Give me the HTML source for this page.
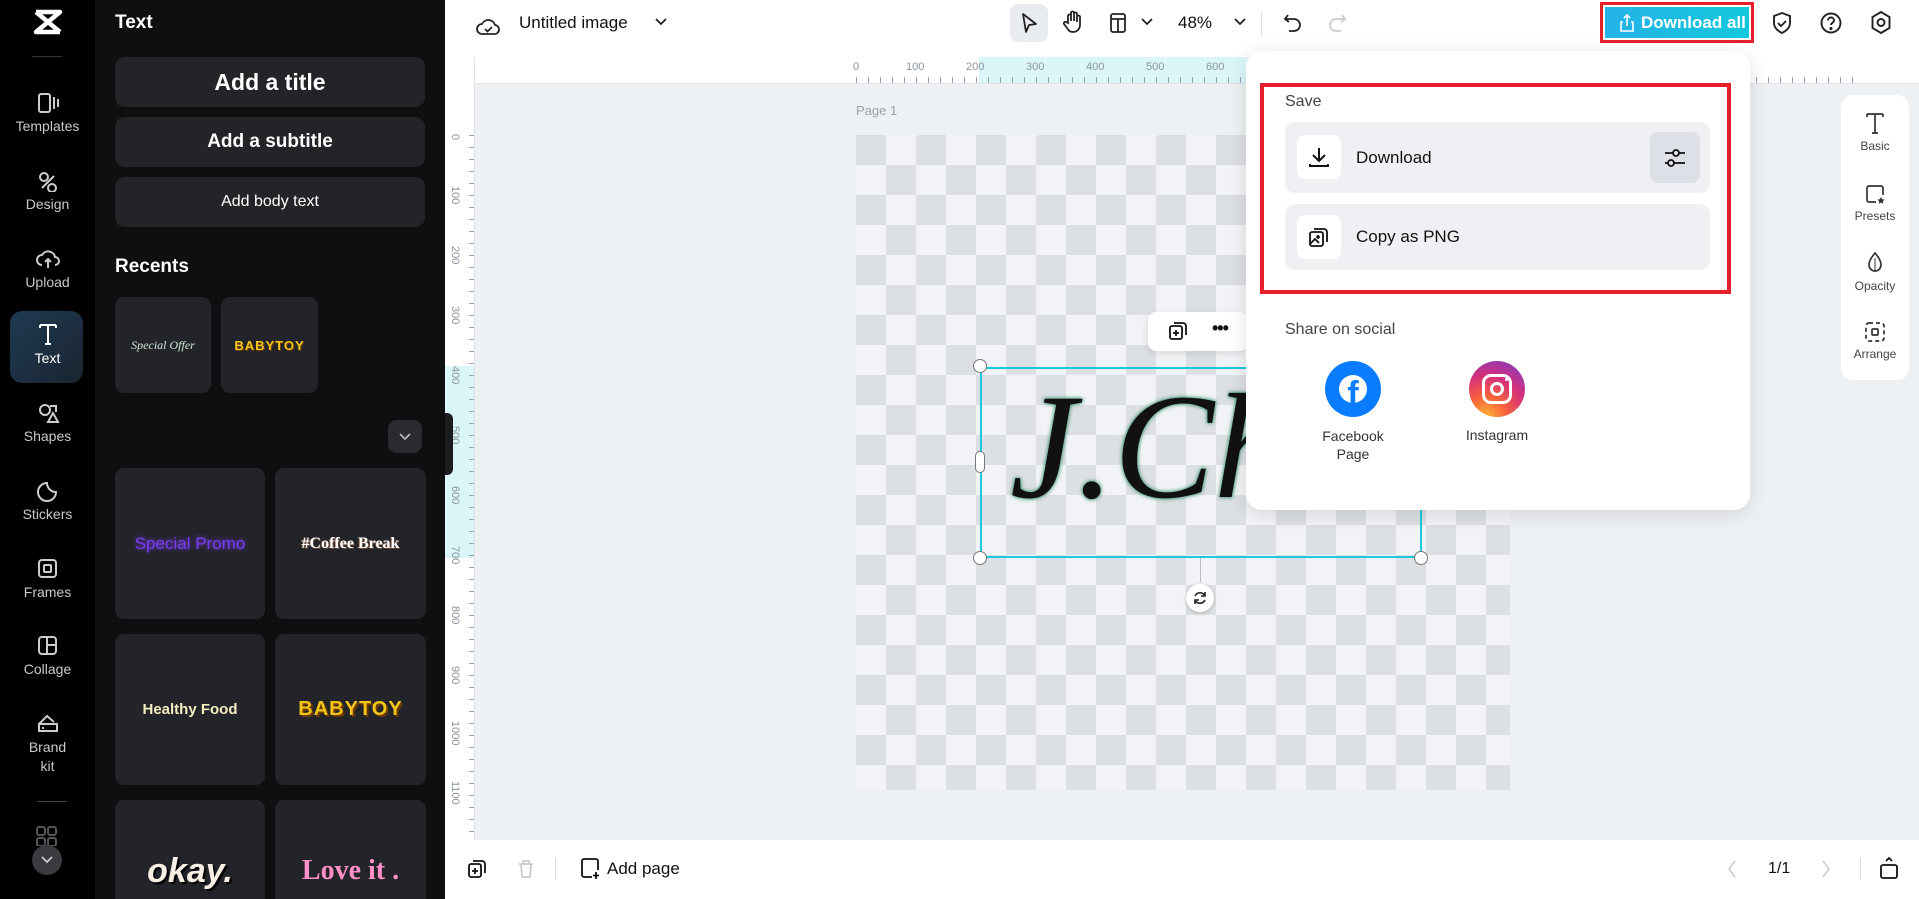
<!DOCTYPE html>
<html><head><meta charset="utf-8">
<style>
*{box-sizing:border-box;margin:0;padding:0}
html,body{width:1919px;height:899px;overflow:hidden}
body{position:relative;font-family:"Liberation Sans",sans-serif;background:#eef1f4}
.a{position:absolute}
.rail{left:0;top:0;width:95px;height:899px;background:#000}
.ri{position:absolute;left:0;width:95px;text-align:center;color:#c9c9cc;font-size:14px}
.ri svg{display:block;margin:0 auto 4px}
.panel{left:95px;top:0;width:350px;height:899px;background:#0e0f11;overflow:hidden}
.btn{position:absolute;left:20px;width:310px;background:#232428;border-radius:10px;color:#fff;text-align:center;font-weight:bold}
.tile{position:absolute;background:#232429;border-radius:9px;display:flex;align-items:center;justify-content:center}
.top{left:445px;top:0;width:1474px;height:57px;background:#fff}
.ico{position:absolute}
.rulerT{left:475px;top:57px;width:1444px;height:27px;background:#fff;border-bottom:1px solid #dfe3e8}
.rulerL{left:445px;top:57px;width:30px;height:783px;background:#fff;border-right:1px solid #dfe3e8;overflow:hidden}
.bottom{left:445px;top:840px;width:1474px;height:59px;background:#fff}
.pop{left:1246px;top:51px;width:504px;height:459px;background:#fff;border-radius:16px;box-shadow:0 4px 20px rgba(0,0,0,.12)}
.row{position:absolute;left:39px;width:425px;background:#eef0f3;border-radius:10px}
.sq{position:absolute;left:12px;width:44px;height:44px;background:#fff;border-radius:8px}
.rp{position:absolute;left:0;width:68px;text-align:center;font-size:12px;color:#444}
.rp svg{display:block;margin:0 auto 4px}
</style></head><body>

<!-- rail -->
<div class="a rail">
 <svg class="a" style="left:33px;top:8px" width="30" height="28" viewBox="0 0 30 28"><path d="M3 4h24l-24 20h24M3 4l24 20" stroke="#fff" stroke-width="4.5" fill="none" stroke-linejoin="round"/></svg>
 <div class="a" style="left:32px;top:56px;width:30px;height:1px;background:#333"></div>
 <div class="ri" style="top:92px"><svg width="24" height="22" viewBox="0 0 24 22" fill="none" stroke="#ccc" stroke-width="2"><rect x="3" y="2" width="11" height="18" rx="2"/><path d="M18 5v12M22 7v8"/></svg>Templates</div>
 <div class="ri" style="top:170px"><svg width="24" height="22" viewBox="0 0 24 22" fill="none" stroke="#ccc" stroke-width="2"><circle cx="8" cy="7" r="4"/><path d="M6 18l12-12M12 18a4 4 0 108 0 4 4 0 10-8 0"/></svg>Design</div>
 <div class="ri" style="top:248px"><svg width="26" height="22" viewBox="0 0 26 22" fill="none" stroke="#ccc" stroke-width="2"><path d="M7 17a5 5 0 010-10 7 7 0 0113 2 4 4 0 010 8M13 20v-9M10 14l3-3 3 3"/></svg>Upload</div>
 <div class="a" style="left:10px;top:311px;width:73px;height:72px;border-radius:12px;background:linear-gradient(135deg,#1e3a52,#1a2430)"></div>
 <div class="ri" style="top:322px;color:#fff"><svg width="22" height="24" viewBox="0 0 22 24" fill="none" stroke="#fff" stroke-width="2"><path d="M3 3h16M11 3v19M3 3v3M19 3v3M8 22h6"/></svg>Text</div>
 <div class="ri" style="top:402px"><svg width="24" height="22" viewBox="0 0 24 22" fill="none" stroke="#ccc" stroke-width="2"><circle cx="9" cy="8" r="5"/><path d="M14 4h6v6M12 20l5-9 5 9z"/></svg>Shapes</div>
 <div class="ri" style="top:480px"><svg width="24" height="22" viewBox="0 0 24 22" fill="none" stroke="#ccc" stroke-width="2"><path d="M20 12a9 9 0 11-9-9c0 5 4 9 9 9zM11 3c0 5 4 9 9 9"/></svg>Stickers</div>
 <div class="ri" style="top:558px"><svg width="24" height="22" viewBox="0 0 24 22" fill="none" stroke="#ccc" stroke-width="2"><rect x="3" y="2" width="17" height="17" rx="3"/><rect x="8" y="7" width="7" height="7" rx="1"/></svg>Frames</div>
 <div class="ri" style="top:635px"><svg width="24" height="22" viewBox="0 0 24 22" fill="none" stroke="#ccc" stroke-width="2"><rect x="3" y="2" width="17" height="17" rx="3"/><path d="M11 2v17M11 10h9"/></svg>Collage</div>
 <div class="ri" style="top:712px;line-height:19px"><svg width="24" height="22" viewBox="0 0 24 22" fill="none" stroke="#ccc" stroke-width="2"><path d="M3 12h18v7H3zM3 12l8-8 7 6M6 16h2"/></svg>Brand<br>kit</div>
 <div class="a" style="left:37px;top:801px;width:30px;height:1px;background:#444"></div>
 <svg class="a" style="left:36px;top:826px" width="22" height="20"><rect x="1" y="1" width="8" height="8" rx="2" fill="none" stroke="#555" stroke-width="2"/><rect x="12" y="1" width="8" height="8" rx="2" fill="none" stroke="#555" stroke-width="2"/><rect x="1" y="12" width="8" height="8" rx="2" fill="none" stroke="#555" stroke-width="2"/><rect x="12" y="12" width="8" height="8" rx="2" fill="none" stroke="#555" stroke-width="2"/></svg>
 <div class="a" style="left:32px;top:845px;width:30px;height:30px;border-radius:50%;background:#3a3b40"></div>
 <svg class="a" style="left:41px;top:856px" width="12" height="8"><path d="M1 1l5 5 5-5" stroke="#ccc" stroke-width="1.8" fill="none"/></svg>
</div>
<div class="a" style="left:97px;top:890px;width:4px;height:9px;background:#e02020"></div>
<div class="a" style="left:442px;top:890px;width:3px;height:9px;background:#e02020"></div>

<!-- panel -->
<div class="a panel">
 <div class="a" style="left:20px;top:12px;color:#fff;font-weight:bold;font-size:19px">Text</div>
 <div class="btn" style="top:57px;height:50px;line-height:50px;font-size:23px">Add a title</div>
 <div class="btn" style="top:117px;height:50px;line-height:50px;font-size:19px">Add a subtitle</div>
 <div class="btn" style="top:177px;height:50px;line-height:50px;font-size:16px;font-weight:normal">Add body text</div>
 <div class="a" style="left:20px;top:256px;color:#fff;font-weight:bold;font-size:19px">Recents</div>
 <div class="tile" style="left:20px;top:297px;width:96px;height:96px"><span style="font-family:'Liberation Serif',serif;font-style:italic;color:#cfe8d8;font-size:12px">Special Offer</span></div>
 <div class="tile" style="left:126px;top:297px;width:97px;height:96px"><span style="color:#f5c518;font-weight:bold;font-size:13px;letter-spacing:1px;text-shadow:1px 1px 0 #6a3a00">BABYTOY</span></div>
 <div class="tile" style="left:293px;top:420px;width:34px;height:33px;background:#2a2b30"><svg width="12" height="8"><path d="M1 1l5 5 5-5" stroke="#bbb" stroke-width="1.6" fill="none"/></svg></div>
 <div class="tile" style="left:20px;top:468px;width:150px;height:151px"><span style="color:#7a3cf0;font-size:17px;text-shadow:0 0 5px #7a3cf0">Special Promo</span></div>
 <div class="tile" style="left:180px;top:468px;width:151px;height:151px"><span style="font-family:'Liberation Serif',serif;font-weight:bold;color:#fff;font-size:16px;text-shadow:1px 1px 0 #6b4a3a,-1px 0 0 #6b4a3a">#Coffee Break</span></div>
 <div class="tile" style="left:20px;top:634px;width:150px;height:151px"><span style="color:#f3edc0;font-weight:bold;font-size:15px">Healthy Food</span></div>
 <div class="tile" style="left:180px;top:634px;width:151px;height:151px"><span style="color:#f5c518;font-weight:bold;font-size:20px;letter-spacing:1px;text-shadow:2px 2px 0 #6a3a00">BABYTOY</span></div>
 <div class="tile" style="left:20px;top:800px;width:150px;height:130px;align-items:flex-start;padding-top:52px"><span style="color:#f8efe4;font-weight:bold;font-style:italic;font-size:34px;text-shadow:2px 2px 0 #000">okay.</span></div>
 <div class="tile" style="left:180px;top:800px;width:151px;height:130px;align-items:flex-start;padding-top:55px"><span style="font-family:'Liberation Serif',serif;color:#ff8fc8;font-weight:bold;font-size:28px">Love it .</span></div>
</div>

<!-- top bar -->
<div class="a top">
 <svg class="ico" style="left:31px;top:16px" width="24" height="22" viewBox="0 0 24 22" fill="none" stroke="#222" stroke-width="1.8"><path d="M6 18a5 5 0 010-10 7 7 0 0113 1 4.5 4.5 0 01-1 9z"/><path d="M9 13l2.5 2.5L16 11"/></svg>
 <div class="a" style="left:74px;top:13px;font-size:17px;color:#111">Untitled image</div>
 <svg class="ico" style="left:210px;top:18px" width="12" height="8"><path d="M1 1l5 5 5-5" stroke="#222" stroke-width="1.8" fill="none"/></svg>
 <div class="a" style="left:565px;top:4px;width:38px;height:38px;border-radius:8px;background:#e8ebef"></div>
 <svg class="ico" style="left:574px;top:12px" width="20" height="22"><path d="M4 2l13 10-7 1-3 7z" stroke="#222" stroke-width="1.8" fill="none" stroke-linejoin="round"/></svg>
 <svg class="ico" style="left:617px;top:10px" width="22" height="24" fill="none" stroke="#222" stroke-width="1.8"><path d="M6 13V6a1.5 1.5 0 013 0v5V3a1.5 1.5 0 013 0v8V4a1.5 1.5 0 013 0v8V7a1.5 1.5 0 013 0v8a7 7 0 01-7 7c-3 0-4-1-6-4l-3-4a1.5 1.5 0 012-2z"/></svg>
 <svg class="ico" style="left:664px;top:12px" width="18" height="22" fill="none" stroke="#222" stroke-width="1.8"><rect x="2" y="2" width="14" height="18" rx="2"/><path d="M2 7h14M9 7v13"/></svg>
 <svg class="ico" style="left:696px;top:18px" width="12" height="8"><path d="M1 1l5 5 5-5" stroke="#222" stroke-width="1.8" fill="none"/></svg>
 <div class="a" style="left:733px;top:13px;font-size:17px;color:#111">48%</div>
 <svg class="ico" style="left:789px;top:18px" width="12" height="8"><path d="M1 1l5 5 5-5" stroke="#222" stroke-width="1.8" fill="none"/></svg>
 <div class="a" style="left:816px;top:12px;width:1px;height:24px;background:#ddd"></div>
 <svg class="ico" style="left:838px;top:12px" width="20" height="20" fill="none" stroke="#222" stroke-width="1.8"><path d="M5 3L2 7l4 3M2 7h9a6 6 0 010 12H6"/></svg>
 <svg class="ico" style="left:882px;top:12px" width="20" height="20" fill="none" stroke="#c8ccd2" stroke-width="1.8"><path d="M15 3l3 4-4 3M18 7H9a6 6 0 000 12h5"/></svg>
 <div class="a" style="left:1155px;top:2px;width:154px;height:41px;border:3px solid #e5202a"></div>
 <div class="a" style="left:1160px;top:7px;width:144px;height:31px;background:linear-gradient(90deg,#25b2e6,#14c8dc);color:#fff;font-size:17px;font-weight:bold;line-height:31px;padding-left:36px">Download all</div>
 <svg class="ico" style="left:1174px;top:14px" width="16" height="18" fill="none" stroke="#fff" stroke-width="1.6"><path d="M4 8H2v9h12V8h-2M8 12V1M5 4l3-3 3 3"/></svg>
 <svg class="ico" style="left:1326px;top:11px" width="22" height="24" fill="none" stroke="#222" stroke-width="1.9"><path d="M11 2l8 3v7c0 5-4 8-8 10-4-2-8-5-8-10V5z"/><path d="M7 12l3 3 5-5"/></svg>
 <svg class="ico" style="left:1374px;top:11px" width="24" height="24" fill="none" stroke="#222" stroke-width="1.9"><circle cx="12" cy="12" r="9.5"/><path d="M9 9.5a3 3 0 116 0c0 2-3 2.5-3 4.5"/><circle cx="12" cy="17.5" r=".6" fill="#222"/></svg>
 <svg class="ico" style="left:1424px;top:10px" width="24" height="26" fill="none" stroke="#222" stroke-width="1.9"><path d="M12 2l8.5 5v11L12 23 3.5 18V7z"/><circle cx="12" cy="12.5" r="3.5"/></svg>
</div>

<!-- rulers -->
<div class="a rulerT">
 <div class="a" style="left:504px;top:0;width:442px;height:26px;background:#dbf6f9"></div>
 <div class="a" style="left:381px;top:20px;width:1000px;height:6px;background:repeating-linear-gradient(90deg,#9aa3ad 0 1px,transparent 1px 12px)"></div>
</div>
<div class="a" style="left:475px;top:61px;width:900px;height:14px;font-size:11px;color:#8a939d">
 <span class="a" style="left:378px">0</span><span class="a" style="left:431px">100</span><span class="a" style="left:491px">200</span><span class="a" style="left:551px">300</span><span class="a" style="left:611px">400</span><span class="a" style="left:671px">500</span><span class="a" style="left:731px">600</span>
</div>
<div class="a rulerL">
 <div class="a" style="left:0;top:309px;width:29px;height:192px;background:#dbf6f9"></div>
 <div class="a" style="left:24px;top:78px;width:5px;height:720px;background:repeating-linear-gradient(180deg,#9aa3ad 0 1px,transparent 1px 12px)"></div>
</div>
<div class="a" style="left:445px;top:0;width:20px;height:840px;font-size:11px;color:#8a939d;overflow:hidden">
 <div class="a" style="left:16px;top:134px;transform:rotate(90deg);transform-origin:left top">0</div>
 <div class="a" style="left:16px;top:186px;transform:rotate(90deg);transform-origin:left top">100</div>
 <div class="a" style="left:16px;top:246px;transform:rotate(90deg);transform-origin:left top">200</div>
 <div class="a" style="left:16px;top:306px;transform:rotate(90deg);transform-origin:left top">300</div>
 <div class="a" style="left:16px;top:366px;transform:rotate(90deg);transform-origin:left top">400</div>
 <div class="a" style="left:16px;top:426px;transform:rotate(90deg);transform-origin:left top">500</div>
 <div class="a" style="left:16px;top:486px;transform:rotate(90deg);transform-origin:left top">600</div>
 <div class="a" style="left:16px;top:546px;transform:rotate(90deg);transform-origin:left top">700</div>
 <div class="a" style="left:16px;top:606px;transform:rotate(90deg);transform-origin:left top">800</div>
 <div class="a" style="left:16px;top:666px;transform:rotate(90deg);transform-origin:left top">900</div>
 <div class="a" style="left:16px;top:721px;transform:rotate(90deg);transform-origin:left top">1000</div>
 <div class="a" style="left:16px;top:781px;transform:rotate(90deg);transform-origin:left top">1100</div>
</div>
<div class="a" style="left:445px;top:413px;width:8px;height:62px;background:#1b1c1f;border-radius:0 6px 6px 0"></div>

<!-- canvas -->
<div class="a" style="left:856px;top:103px;font-size:13px;color:#9aa2ab">Page 1</div>
<div class="a" style="left:856px;top:135px;width:654px;height:655px;background:repeating-conic-gradient(from 90deg,#dcdfe3 0 25%,#f1f3f6 0 50%);background-size:60px 60px"></div>
<div class="a" style="left:1148px;top:312px;width:100px;height:39px;background:#fff;border-radius:8px;box-shadow:0 2px 8px rgba(0,0,0,.12)"></div>
<svg class="ico" style="left:1168px;top:321px" width="20" height="20" fill="none" stroke="#111" stroke-width="1.8"><rect x="2" y="5" width="12" height="13" rx="2"/><path d="M6 2h9a3 3 0 013 3v9M8 9v6M5 12h6"/></svg>
<div class="a" style="left:1212px;top:318px;font-size:18px;font-weight:bold;color:#111;letter-spacing:-1px">•••</div>
<div class="a" style="left:980px;top:367px;width:442px;height:191px;border:2px solid #1ac8dc"></div>
<div class="a" style="left:1010px;top:372px;font-family:'Liberation Serif',serif;font-style:italic;font-size:150px;line-height:150px;color:#111;text-shadow:0 0 3px #4e9c80,0 0 5px #4e9c80">J.Chen</div>
<div class="a" style="left:973px;top:359px;width:14px;height:14px;border-radius:50%;background:#fff;border:1.5px solid #777"></div>
<div class="a" style="left:973px;top:551px;width:14px;height:14px;border-radius:50%;background:#fff;border:1.5px solid #777"></div>
<div class="a" style="left:1414px;top:551px;width:14px;height:14px;border-radius:50%;background:#fff;border:1.5px solid #777"></div>
<div class="a" style="left:975px;top:451px;width:10px;height:22px;border-radius:5px;background:#fff;border:1.5px solid #777"></div>
<div class="a" style="left:1200px;top:558px;width:1px;height:24px;background:#bbb"></div>
<div class="a" style="left:1186px;top:584px;width:28px;height:28px;border-radius:50%;background:#fff;box-shadow:0 1px 4px rgba(0,0,0,.2)"></div>
<svg class="ico" style="left:1192px;top:590px" width="16" height="16" fill="none" stroke="#222" stroke-width="1.6"><path d="M13 6a5.5 5.5 0 00-10 0M3 10a5.5 5.5 0 0010 0M13 2v4H9M3 14v-4h4"/></svg>

<!-- right float panel -->
<div class="a" style="left:1841px;top:95px;width:68px;height:285px;background:#fff;border-radius:12px">
 <div class="rp" style="top:16px"><svg width="22" height="24" fill="none" stroke="#333" stroke-width="1.7"><path d="M3 3h16M11 3v19M3 3v3M19 3v3M8 22h6"/></svg>Basic</div>
 <div class="rp" style="top:88px"><svg width="22" height="22" fill="none" stroke="#333" stroke-width="1.7"><path d="M12 19H5a2 2 0 01-2-2V5a2 2 0 012-2h12a2 2 0 012 2v7"/><path d="M17 14l1.2 2.3 2.5.3-1.9 1.7.5 2.5-2.3-1.2-2.3 1.2.5-2.5-1.9-1.7 2.5-.3z" fill="#333" stroke="none"/></svg>Presets</div>
 <div class="rp" style="top:156px"><svg width="22" height="24" fill="none" stroke="#333" stroke-width="1.7"><path d="M11 2c4 5 6 8 6 12a6 6 0 01-12 0c0-4 2-7 6-12z"/><path d="M11 7v13" stroke-width="1"/></svg>Opacity</div>
 <div class="rp" style="top:226px"><svg width="22" height="22" fill="none" stroke="#333" stroke-width="1.7" stroke-dasharray="4 3"><rect x="2" y="2" width="18" height="18" rx="3"/><rect x="8" y="8" width="6" height="6" rx="1" stroke-dasharray="none"/></svg>Arrange</div>
</div>

<!-- bottom bar -->
<div class="a bottom">
 <svg class="ico" style="left:22px;top:19px" width="20" height="20" fill="none" stroke="#111" stroke-width="1.8"><rect x="2" y="5" width="12" height="13" rx="2"/><path d="M6 2h9a3 3 0 013 3v9M8 9v6M5 12h6"/></svg>
 <svg class="ico" style="left:72px;top:19px" width="18" height="20" fill="none" stroke="#c8ccd2" stroke-width="1.8"><path d="M2 5h14M6 5V2h6v3M4 5l1 13h8l1-13"/></svg>
 <div class="a" style="left:110px;top:18px;width:1px;height:22px;background:#ddd"></div>
 <svg class="ico" style="left:134px;top:17px" width="22" height="24" fill="none" stroke="#111" stroke-width="1.8"><path d="M13 20H5a2 2 0 01-2-2V4a2 2 0 012-2h12a2 2 0 012 2v9M17 15v7M14 18.5h6"/></svg>
 <div class="a" style="left:162px;top:19px;font-size:17px;color:#111">Add page</div>
 <svg class="ico" style="left:1282px;top:20px" width="10" height="18"><path d="M8 1L2 9l6 8" stroke="#c8ccd2" stroke-width="1.6" fill="none"/></svg>
 <div class="a" style="left:1323px;top:20px;font-size:16px;color:#111">1/1</div>
 <svg class="ico" style="left:1376px;top:20px" width="10" height="18"><path d="M2 1l6 8-6 8" stroke="#c8ccd2" stroke-width="1.6" fill="none"/></svg>
 <div class="a" style="left:1415px;top:18px;width:1px;height:22px;background:#ddd"></div>
 <svg class="ico" style="left:1434px;top:16px" width="20" height="24" fill="none" stroke="#111" stroke-width="1.8"><rect x="2" y="9" width="16" height="13" rx="2"/><path d="M7 5l3-3 3 3"/></svg>
</div>

<!-- popup -->
<div class="a pop">
 <div class="a" style="left:14px;top:32px;width:471px;height:211px;border:4px solid #e5202a"></div>
 <div class="a" style="left:39px;top:42px;font-size:16px;color:#444">Save</div>
 <div class="row" style="top:71px;height:71px">
  <div class="sq" style="top:13px"><svg style="margin:10px" width="24" height="24" fill="none" stroke="#111" stroke-width="2"><path d="M12 3v13M6 10l6 6 6-6M3 19v2h18v-2"/></svg></div>
  <div class="a" style="left:71px;top:26px;font-size:17px;color:#111">Download</div>
  <div class="a" style="left:365px;top:10px;width:50px;height:51px;background:#dde1e7;border-radius:8px"><svg style="margin:15px 13px" width="24" height="22" fill="none" stroke="#111" stroke-width="1.8"><path d="M2 6h8M16 6h6M2 16h3M11 16h11"/><circle cx="13" cy="6" r="3"/><circle cx="8" cy="16" r="3"/></svg></div>
 </div>
 <div class="row" style="top:153px;height:66px">
  <div class="sq" style="top:11px"><svg style="margin:11px" width="22" height="22" fill="none" stroke="#111" stroke-width="1.8"><rect x="2" y="6" width="13" height="14" rx="2"/><path d="M6 3h10a3 3 0 013 3v10M2 18l5-5 4 4M9 11a1 1 0 100-.1"/></svg></div>
  <div class="a" style="left:71px;top:23px;font-size:17px;color:#111">Copy as PNG</div>
 </div>
 <div class="a" style="left:39px;top:270px;font-size:16px;color:#444">Share on social</div>
 <div class="a" style="left:79px;top:310px;width:56px;height:56px;border-radius:50%;background:#0a7cff"></div>
 <div class="a" style="left:93px;top:324px;width:28px;height:28px;border-radius:50%;background:#fff"></div>
 <div class="a" style="left:92px;top:315px;font-size:34px;font-weight:bold;color:#0a7cff;width:30px;text-align:center;line-height:56px">f</div>
 <div class="a" style="left:52px;top:376px;width:110px;text-align:center;font-size:14px;color:#333;line-height:18px">Facebook<br>Page</div>
 <div class="a" style="left:223px;top:310px;width:56px;height:56px;border-radius:50%;background:radial-gradient(circle at 30% 100%,#fdb435 0,#f7623a 30%,#d6307a 60%,#8a3ab9 90%)"></div>
 <div class="a" style="left:236px;top:323px;width:30px;height:30px;border:3px solid #fff;border-radius:9px"></div>
 <div class="a" style="left:244px;top:331px;width:14px;height:14px;border:3px solid #fff;border-radius:50%"></div>
 <div class="a" style="left:259px;top:327px;width:3px;height:3px;background:#fff;border-radius:50%"></div>
 <div class="a" style="left:196px;top:376px;width:110px;text-align:center;font-size:14px;color:#333">Instagram</div>
</div>
</body></html>
